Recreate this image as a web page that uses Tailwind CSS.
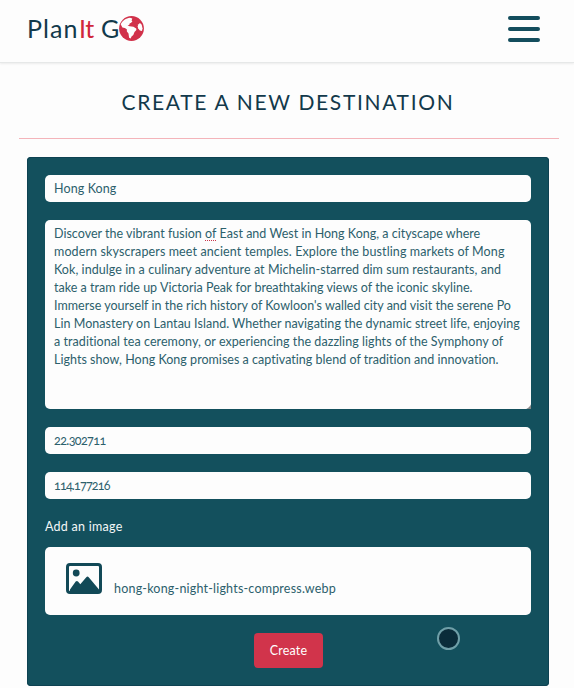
<!DOCTYPE html>
<html lang="en">
<head>
<meta charset="utf-8">
<title>PlanIt Go</title>
<script src="https://cdn.jsdelivr.net/npm/@tailwindcss/browser@4"></script>
</head>
<body class="h-[688px] overflow-hidden bg-[#fdfdfd] font-['Lato','Noto_Sans',sans-serif] text-[12.5px] leading-[18px] text-[#2c606c] oldstyle-nums">
<header class="flex h-[63px] items-start justify-between border-b border-[#e6e8e8] pl-[27px] pr-[34px] shadow-[0_1px_2px_rgba(0,0,0,0.07)]">
  <a class="mt-[13px] flex h-[30px] items-center text-[25px] leading-[30px] text-[#12394b]">
    <span class="w-[52px] tracking-[1.1px]">Plan</span><span class="w-[22px] text-[#d0273b] tracking-[-0.5px]">It</span><span class="w-[18px] tracking-[-0.5px]">G</span>
    <svg class="h-[25px] w-[25px]" viewBox="0 0 25 25">
      <circle cx="12.5" cy="12.5" r="12.4" fill="#d1314a"/>
      <path fill="#fdfdfd" d="M1.7 8.2C3.4 4.8 7 2 11 1.7l2.3.9-.7 1.8.8 1.2-1.6 1.4-1 .2-.5 1.6-1.7.8 2 .7 3.8.4 2.8 1.7.2 1.5-1.9 2-1.2 3.1-1.8 1.5-.8 1.9-1.6-.6-.6-4.4-1.6-2-.1-2.1-2-1.4-2.4-.4z"/>
      <path fill="#fdfdfd" d="m19.2 8.4 1.8-1.3 1.7 1.6.8 3.6-.5 2.7-2.1-.4-1.7-2-.5-2.1z"/>
    </svg>
  </a>
  <button class="mt-[16px] flex w-[32px] flex-col gap-[7px]" aria-label="Menu">
    <span class="h-[4px] w-full rounded-full bg-[#134d5d]"></span>
    <span class="h-[4px] w-full rounded-full bg-[#134d5d]"></span>
    <span class="h-[4px] w-full rounded-full bg-[#134d5d]"></span>
  </button>
</header>
<main class="pl-[19px] pr-[17px]">
  <h1 class="flex h-[75px] items-center justify-center pt-[2px] text-[21px] leading-[28px] tracking-[1.67px] text-[#12394b]"><span class="whitespace-nowrap">CREATE A NEW DESTINATION</span></h1>
  <div class="h-[1px] w-[540px] bg-[#f4b4ba]"></div>
  <form class="ml-[8px] mt-[18px] flex h-[529px] w-[522px] flex-col rounded-[4px] bg-[#13505d] px-[18px] pt-[18px] shadow-[inset_0_0_0_1px_#0e4252]">
    <div class="h-[27px] w-[486px] rounded-[5px] bg-[#fdfdfd] px-[9px] py-[5px] tracking-[0.11px]">Hong Kong</div>
    <div class="relative mt-[18px] h-[189px] w-[486px] whitespace-nowrap rounded-[5px] bg-[#fdfdfd] px-[9px] pt-[5px]">
      <p class="tracking-[0.015px]">Discover the vibrant fusion <span class="relative">of<svg class="absolute -bottom-[1px] left-0 h-[2px] w-[11px]" viewBox="0 0 11 2"><path d="M0 .5h11" stroke="#c9364a" stroke-width="1" stroke-dasharray="1 1"/></svg></span> East and West in Hong Kong, a cityscape where</p>
      <p class="tracking-[0.114px]">modern skyscrapers meet ancient temples. Explore the bustling markets of Mong</p>
      <p class="tracking-[0.067px]">Kok, indulge in a culinary adventure at Michelin-starred dim sum restaurants, and</p>
      <p class="tracking-[0.015px]">take a tram ride up Victoria Peak for breathtaking views of the iconic skyline.</p>
      <p class="tracking-[0.023px]">Immerse yourself in the rich history of Kowloon's walled city and visit the serene Po</p>
      <p class="tracking-[0.035px]">Lin Monastery on Lantau Island. Whether navigating the dynamic street life, enjoying</p>
      <p class="tracking-[0.061px]">a traditional tea ceremony, or experiencing the dazzling lights of the Symphony of</p>
      <p class="tracking-[0.025px]">Lights show, Hong Kong promises a captivating blend of tradition and innovation.</p>
      <svg class="absolute bottom-0 right-0 h-[4px] w-[4px]" viewBox="0 0 4 4"><path d="M4 0v4H0z" fill="#888"/></svg>
    </div>
    <div class="mt-[18px] h-[27px] w-[486px] rounded-[5px] bg-[#fdfdfd] px-[9px] py-[5px] tracking-[-0.6px]">22.302711</div>
    <div class="mt-[18px] h-[27px] w-[486px] rounded-[5px] bg-[#fdfdfd] px-[9px] py-[5px] tracking-[-0.8px]">114.177216</div>
    <div class="mt-[19px] h-[17px] tracking-[0.26px] text-[#f3f7f7]">Add an image</div>
    <div class="mt-[12px] flex h-[68px] w-[486px] rounded-[5px] bg-[#fdfdfd] pl-[21px] pt-[16px]">
      <svg class="h-[31px] w-[36px]" viewBox="0 0 36 31">
        <rect x="1.5" y="1.5" width="33" height="28" rx="2.5" fill="none" stroke="#124957" stroke-width="3"/>
        <circle cx="10.2" cy="10" r="3.4" fill="#124957"/>
        <path d="M4 26.5 9.7 18.6q1.2-1.2 2.3 0l2.3 2.6 6-7q1.2-1.2 2.4 0L33 26.5V29H4z" fill="#124957"/>
      </svg>
      <span class="ml-[12px] mt-[17px] tracking-[0.2px]">hong-kong-night-lights-compress.webp</span>
    </div>
    <button type="button" class="ml-[209px] mt-[18px] h-[35px] w-[69px] rounded-[4px] bg-[#d1344b] tracking-[0.18px] text-white">Create</button>
  </form>
</main>
<div class="absolute left-[437px] top-[627px] h-[23px] w-[23px] rounded-full border-2 border-[#6f9fa8] bg-[#0a2c3a]"></div>
</body>
</html>
